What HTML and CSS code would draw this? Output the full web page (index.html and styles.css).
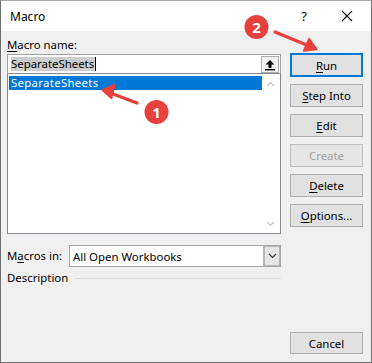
FILE: index.html
```html
<!DOCTYPE html>
<html lang="en">
<head>
    <meta charset="UTF-8">
    <meta name="viewport" content="width=device-width, initial-scale=1.0">
    <title>Macro</title>
    <link rel="stylesheet" href="styles.css">
</head>
<body>
    <div class="window">
        <div class="titlebar">
            <span class="title">Macro</span>
            <span class="help">?</span>
            <span class="close">
                <svg width="12" height="12" viewBox="0 0 12 12">
                    <path d="M1 1 L11 11 M11 1 L1 11" stroke="#000" stroke-width="1.1" fill="none"/>
                </svg>
            </span>
        </div>

        <div class="content">
            <div class="left">
                <label class="label"><u>M</u>acro name:</label>
                <div class="name-input">
                    <span class="name-text"><span class="sel">SeparateSheets</span><span class="caret"></span></span>
                    <span class="up-btn">
                        <svg width="12" height="12" viewBox="0 0 12 12">
                            <path d="M6 1 L1.5 5.5 H4.5 V9 H7.5 V5.5 H10.5 Z" fill="#000"/>
                            <rect x="1" y="10" width="10" height="1.4" fill="#000"/>
                        </svg>
                    </span>
                </div>
                <div class="listbox">
                    <div class="list-items">
                        <div class="item selected">SeparateSheets</div>
                    </div>
                    <div class="scrollbar">
                        <svg width="9" height="6" viewBox="0 0 9 6"><path d="M1 5 L4.5 1.5 L8 5" stroke="#c4c4c4" stroke-width="1.2" fill="none"/></svg>
                        <svg width="9" height="6" viewBox="0 0 9 6"><path d="M1 1 L4.5 4.5 L8 1" stroke="#c4c4c4" stroke-width="1.2" fill="none"/></svg>
                    </div>
                </div>

                <div class="macros-in">
                    <span class="label">M<u>a</u>cros in:</span>
                    <div class="dropdown">
                        <span class="dd-value">All Open Workbooks</span>
                        <span class="dd-btn">
                            <svg width="9" height="6" viewBox="0 0 9 6"><path d="M1 1 L4.5 4.5 L8 1" stroke="#333" stroke-width="1.1" fill="none"/></svg>
                        </span>
                    </div>
                </div>

                <div class="description">
                    <span class="label">Description</span>
                    <span class="rule"></span>
                </div>
            </div>

            <div class="right">
                <button class="btn default"><u>R</u>un</button>
                <button class="btn"><u>S</u>tep Into</button>
                <button class="btn"><u>E</u>dit</button>
                <button class="btn disabled">Create</button>
                <button class="btn"><u>D</u>elete</button>
                <button class="btn"><u>O</u>ptions...</button>
                <button class="btn cancel">Cancel</button>
            </div>
        </div>

        <!-- callout annotations drawn over the dialog -->
        <svg class="annotations" width="372" height="363" viewBox="0 0 372 363">
            <g fill="#e8403c" stroke="#e8403c">
                <line x1="137" y1="103" x2="109" y2="92.5" stroke-width="3.2" stroke-linecap="round"/>
                <path d="M102 90 L115 84.5 L111.5 98.5 Z" stroke-width="1.5" stroke-linejoin="round"/>
                <line x1="275" y1="32" x2="309" y2="46" stroke-width="3.2" stroke-linecap="round"/>
                <path d="M317 49.5 L303.5 51 L309 38.5 Z" stroke-width="1.5" stroke-linejoin="round"/>
                <circle cx="156.5" cy="112" r="12" stroke="none"/>
                <circle cx="256.5" cy="27" r="12" stroke="none"/>
            </g>
            <text x="156.5" y="117.5" class="badge-num">1</text>
            <text x="256.5" y="32.5" class="badge-num">2</text>
        </svg>
    </div>
</body>
</html>
```

FILE: styles.css
```css
body {
    margin: 0;
    padding: 0;
    font-family: "Segoe UI", "Noto Sans", sans-serif;
    font-size: 11.4px;
    color: #000;
    background: #fff;
}

.window {
    position: relative;
    width: 372px;
    height: 363px;
    box-sizing: border-box;
    border: 1px solid #707070;
    border-top-color: #a8a8a8;
    background: #f0f0f0;
    display: flex;
    flex-direction: column;
}

.titlebar {
    height: 30px;
    background: #fff;
    display: flex;
    align-items: center;
    padding-left: 9px;
}

.title {
    flex: 1;
    font-size: 12px;
}

.help {
    width: 14px;
    text-align: center;
    margin-right: 30px;
    font-size: 13px;
}

.close {
    display: flex;
    margin-right: 18px;
}

.content {
    flex: 1;
    display: flex;
    padding: 6px 7px 8px 6px;
}

u {
    text-decoration: underline;
    text-underline-offset: 2px;
}

.left {
    width: 274px;
    display: flex;
    flex-direction: column;
}

.label {
    height: 17px;
    line-height: 16px;
    white-space: nowrap;
}

.name-input {
    height: 19px;
    box-sizing: border-box;
    background: #fff;
    border: 1px solid #a0a0a0;
    border-bottom: none;
    display: flex;
    align-items: center;
    padding-left: 3px;
}

.name-text {
    flex: 1;
    display: flex;
    align-items: center;
}

.sel {
    background: #cdcdcd;
    line-height: 14px;
    padding-right: 1px;
}

.caret {
    width: 1px;
    height: 14px;
    background: #000;
}

.up-btn {
    width: 18px;
    height: 17px;
    box-sizing: border-box;
    border: 1px solid #adadad;
    background: #f3f3f3;
    display: flex;
    align-items: center;
    justify-content: center;
    margin-right: 1px;
    margin-top: 1px;
}

.listbox {
    height: 161px;
    box-sizing: border-box;
    background: #fff;
    border: 1px solid #828790;
    display: flex;
    padding: 2px 1px 1px 1px;
}

.list-items {
    flex: 1;
}

.item {
    height: 14px;
    line-height: 13px;
    padding-left: 2px;
    letter-spacing: 0.3px;
}

.item.selected {
    background: #0078d7;
    color: #fff;
}

.scrollbar {
    width: 17px;
    display: flex;
    flex-direction: column;
    justify-content: space-between;
    align-items: center;
    padding: 5px 0 5px 0;
}

.macros-in {
    display: flex;
    align-items: center;
    margin-top: 11px;
    height: 22px;
}

.macros-in .label {
    width: 62px;
    line-height: 16px;
}

.dropdown {
    flex: 1;
    height: 22px;
    box-sizing: border-box;
    border: 1px solid #a6a6a6;
    background: #fff;
    display: flex;
    align-items: center;
}

.dd-value {
    flex: 1;
    padding-left: 3px;
}

.dd-btn {
    width: 17px;
    height: 20px;
    box-sizing: border-box;
    border: 2px solid #b6b6b6;
    border-right-width: 1px;
    border-top-width: 1px;
    border-bottom-width: 1px;
    background: #e5e5e5;
    display: flex;
    align-items: center;
    justify-content: center;
}

.description {
    display: flex;
    align-items: center;
    margin-top: 3px;
}

.description .label {
    height: 16px;
}

.rule {
    flex: 1;
    height: 1px;
    background: #dcdcdc;
    margin-left: 7px;
    margin-top: 1px;
}

.right {
    width: 73px;
    margin-left: 9px;
    display: flex;
    flex-direction: column;
    padding-top: 16px;
}

.btn {
    height: 23px;
    margin-bottom: 7px;
    box-sizing: border-box;
    border: 1px solid #adadad;
    background: #e1e1e1;
    font-family: "Segoe UI", "Noto Sans", sans-serif;
    font-size: 11.4px;
    color: #000;
    padding: 0;
}

.btn.default {
    height: 24px;
    border: 2px solid #0078d7;
}

.btn.disabled {
    color: #a0a0a0;
    border-color: #bfbfbf;
    background: #e6e6e6;
}

.btn.cancel {
    margin-top: auto;
    margin-bottom: 0;
    height: 22px;
}

.annotations {
    position: absolute;
    left: -1px;
    top: -1px;
    pointer-events: none;
}

.badge-num {
    fill: #fff;
    font-family: "Noto Sans", sans-serif;
    font-weight: bold;
    font-size: 15px;
    text-anchor: middle;
}
```
